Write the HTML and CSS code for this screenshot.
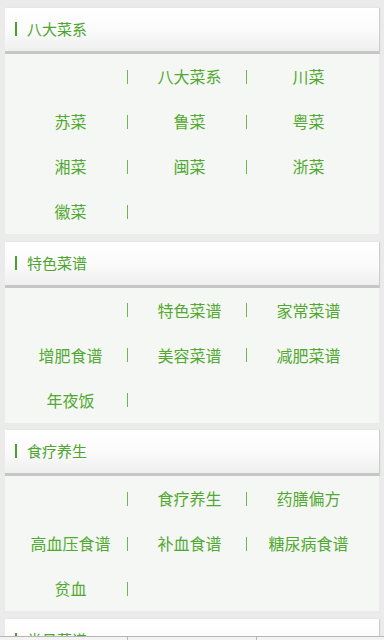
FILE: index.html
```html
<!DOCTYPE html>
<html lang="zh">
<head>
<meta charset="utf-8">
<title>菜谱分类</title>
<link rel="stylesheet" href="styles.css">
</head>
<body>
<div class="page">
  <section class="section">
    <div class="sec-head"><span class="bar"></span><span class="sec-title">八大菜系</span></div>
    <div class="sec-body">
      <div class="cell"><span class="txt"></span><span class="sep"></span></div>
      <div class="cell"><span class="txt">八大菜系</span><span class="sep"></span></div>
      <div class="cell"><span class="txt">川菜</span></div>
      <div class="cell"><span class="txt">苏菜</span><span class="sep"></span></div>
      <div class="cell"><span class="txt">鲁菜</span><span class="sep"></span></div>
      <div class="cell"><span class="txt">粤菜</span></div>
      <div class="cell"><span class="txt">湘菜</span><span class="sep"></span></div>
      <div class="cell"><span class="txt">闽菜</span><span class="sep"></span></div>
      <div class="cell"><span class="txt">浙菜</span></div>
      <div class="cell"><span class="txt">徽菜</span><span class="sep"></span></div>
    </div>
  </section>
  <section class="section">
    <div class="sec-head"><span class="bar"></span><span class="sec-title">特色菜谱</span></div>
    <div class="sec-body">
      <div class="cell"><span class="txt"></span><span class="sep"></span></div>
      <div class="cell"><span class="txt">特色菜谱</span><span class="sep"></span></div>
      <div class="cell"><span class="txt">家常菜谱</span></div>
      <div class="cell"><span class="txt">增肥食谱</span><span class="sep"></span></div>
      <div class="cell"><span class="txt">美容菜谱</span><span class="sep"></span></div>
      <div class="cell"><span class="txt">减肥菜谱</span></div>
      <div class="cell"><span class="txt">年夜饭</span><span class="sep"></span></div>
    </div>
  </section>
  <section class="section">
    <div class="sec-head"><span class="bar"></span><span class="sec-title">食疗养生</span></div>
    <div class="sec-body">
      <div class="cell"><span class="txt"></span><span class="sep"></span></div>
      <div class="cell"><span class="txt">食疗养生</span><span class="sep"></span></div>
      <div class="cell"><span class="txt">药膳偏方</span></div>
      <div class="cell"><span class="txt">高血压食谱</span><span class="sep"></span></div>
      <div class="cell"><span class="txt">补血食谱</span><span class="sep"></span></div>
      <div class="cell"><span class="txt">糖尿病食谱</span></div>
      <div class="cell"><span class="txt">贫血</span><span class="sep"></span></div>
    </div>
  </section>
  <section class="section">
    <div class="sec-head"><span class="bar"></span><span class="sec-title">常见菜谱</span></div>
  </section>
</div>
<div class="tabbar"><span class="tab"></span><span class="tab"></span><span class="tab"></span></div>
</body>
</html>
```
FILE: styles.css
```css
html, body {
  margin: 0;
  padding: 0;
  height: 640px;
  overflow: hidden;
  background: #ebebeb;
  font-family: "Noto Sans CJK SC", "Noto Sans", sans-serif;
}
.page {
  padding: 8px 5px 0 5px;
}
.section {
  margin-bottom: 7.5px;
}
.sec-head {
  height: 43px;
  display: flex;
  align-items: center;
  padding-left: 10px;
  background: linear-gradient(#ffffff, #fbfbfb 50%, #efefef);
  border-bottom: 3px solid #c6c6c6;
  box-shadow: 1px 0 1px rgba(0,0,0,0.12);
}
.bar {
  width: 2px;
  height: 14px;
  background: #4aa12a;
  margin-right: 10px;
  margin-top: -1px;
}
.sec-title {
  font-size: 15px;
  color: #4ea52f;
  line-height: 1;
  margin-top: -2px;
}
.sec-body {
  background: #f5f7f4;
  display: grid;
  grid-template-columns: repeat(3, 119px);
  grid-auto-rows: 45px;
  padding-left: 9px;
}
.cell {
  display: flex;
  align-items: center;
}
.txt {
  width: 113px;
  text-align: center;
  font-size: 16px;
  color: #52a932;
  line-height: 1;
  margin-top: -1px;
}
.sep {
  width: 1px;
  height: 14px;
  background: #6db74e;
}
.tabbar {
  position: fixed;
  left: 0;
  right: 0;
  bottom: 0;
  height: 3px;
  display: flex;
  border-top: 1px solid #b5b5b5;
  background: #f3f3f3;
}
.tab {
  flex: 1;
  border-left: 1px solid #b8b8b8;
}
.tab:first-child {
  border-left: none;
}
```
